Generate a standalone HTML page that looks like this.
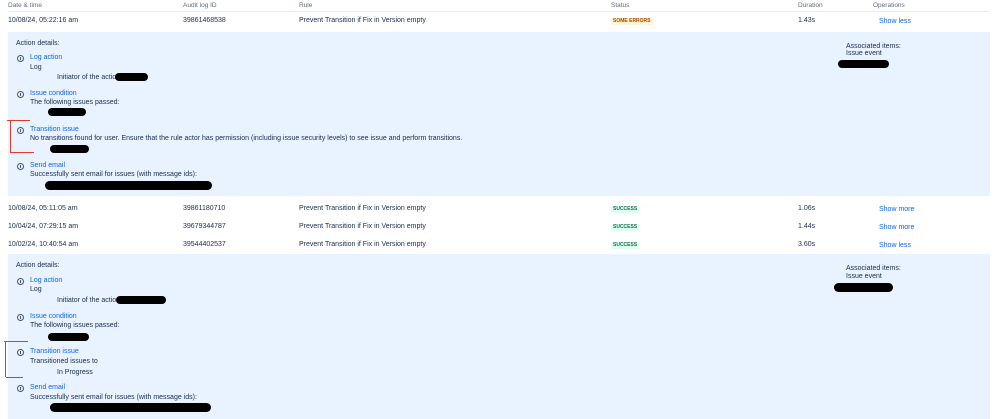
<!DOCTYPE html>
<html><head><meta charset="utf-8"><style>
body{margin:0;width:999px;height:419px;background:#fff;position:relative;overflow:hidden;font-family:"Liberation Sans",sans-serif;color:#172b4d}
.t{position:absolute;font-size:7px;line-height:8px;white-space:nowrap;margin-top:1px}
.h{color:#5e6c84;font-size:6.5px}
.l{color:#0c66e4}
.p{position:absolute;left:8px;width:982px;background:#e9f2ff}
.b{position:absolute;background:#000;border-radius:5px}
.i{position:absolute;width:5px;height:5px;border:1px solid #44546f;border-radius:50%}
.i:after{content:"";position:absolute;left:2px;top:1px;width:1px;height:3px;background:#44546f}
.r{position:absolute;background:#e5372c}
.bd{position:absolute;font-size:5px;font-weight:bold;line-height:7px;padding:0 2px;border-radius:2px;margin-top:1px}
</style></head><body>
<div class="t h" style="left:8px;top:1px">Date &amp; time</div>
<div class="t h" style="left:183px;top:1px">Audit log ID</div>
<div class="t h" style="left:299px;top:1px">Rule</div>
<div class="t h" style="left:611px;top:1px">Status</div>
<div class="t h" style="left:798px;top:1px">Duration</div>
<div class="t h" style="left:873px;top:1px">Operations</div>
<div style="position:absolute;left:8px;top:11px;width:982px;height:1px;background:#ebecf0"></div>

<div class="t" style="left:8px;top:16px">10/08/24, 05:22:16 am</div>
<div class="t" style="left:183px;top:16px">39861468538</div>
<div class="t" style="left:299px;top:16px">Prevent Transition if Fix in Version empty</div>
<div class="bd" style="left:611px;top:17px;background:#fff4d6;color:#a54800">SOME ERRORS</div>
<div class="t" style="left:798px;top:16px">1.43s</div>
<div class="t l" style="left:879px;top:17px">Show less</div>

<div class="p" style="top:32px;height:164px"></div>
<div class="t" style="left:16px;top:39px">Action details:</div>
<div class="i" style="left:17px;top:55px"></div><div class="t l" style="left:30px;top:53px">Log action</div>
<div class="t" style="left:30px;top:63px">Log</div>
<div class="t" style="left:57px;top:73px">Initiator of the action</div><div class="b" style="left:115px;top:73px;width:33px;height:8px"></div>
<div class="i" style="left:17px;top:91px"></div><div class="t l" style="left:30px;top:89px">Issue condition</div>
<div class="t" style="left:30px;top:98px">The following issues passed:</div><div class="b" style="left:48px;top:108px;width:38px;height:8px"></div>
<div class="r" style="left:7px;top:120px;width:23px;height:1px"></div><div class="r" style="left:10px;top:120px;width:1px;height:33px"></div><div class="r" style="left:11px;top:152px;width:23px;height:1px"></div>
<div class="i" style="left:17px;top:127px"></div><div class="t l" style="left:30px;top:125px">Transition issue</div>
<div class="t" style="left:30px;top:134px">No transitions found for user. Ensure that the rule actor has permission (including issue security levels) to see issue and perform transitions.</div>
<div class="b" style="left:50px;top:145px;width:39px;height:8px"></div>
<div class="i" style="left:17px;top:163px"></div><div class="t l" style="left:30px;top:161px">Send email</div>
<div class="t" style="left:30px;top:170px">Successfully sent email for issues (with message ids):</div>
<div class="b" style="left:45px;top:181px;width:167px;height:9px"></div>
<div class="t" style="left:846px;top:42px">Associated items:</div>
<div class="t" style="left:846px;top:49px">Issue event</div>
<div class="b" style="left:838px;top:60px;width:51px;height:8px"></div>

<div class="t" style="left:8px;top:204px">10/08/24, 05:11:05 am</div>
<div class="t" style="left:183px;top:204px">39861180710</div>
<div class="t" style="left:299px;top:204px">Prevent Transition if Fix in Version empty</div>
<div class="bd" style="left:611px;top:205px;background:#dcfff1;color:#216e4e">SUCCESS</div>
<div class="t" style="left:798px;top:204px">1.06s</div>
<div class="t l" style="left:879px;top:205px">Show more</div>

<div class="t" style="left:8px;top:222px">10/04/24, 07:29:15 am</div>
<div class="t" style="left:183px;top:222px">39679344787</div>
<div class="t" style="left:299px;top:222px">Prevent Transition if Fix in Version empty</div>
<div class="bd" style="left:611px;top:223px;background:#dcfff1;color:#216e4e">SUCCESS</div>
<div class="t" style="left:798px;top:222px">1.44s</div>
<div class="t l" style="left:879px;top:223px">Show more</div>

<div class="t" style="left:8px;top:240px">10/02/24, 10:40:54 am</div>
<div class="t" style="left:183px;top:240px">39544402537</div>
<div class="t" style="left:299px;top:240px">Prevent Transition if Fix in Version empty</div>
<div class="bd" style="left:611px;top:241px;background:#dcfff1;color:#216e4e">SUCCESS</div>
<div class="t" style="left:798px;top:240px">3.60s</div>
<div class="t l" style="left:879px;top:241px">Show less</div>

<div class="p" style="top:254px;height:165px"></div>
<div class="t" style="left:16px;top:261px">Action details:</div>
<div class="i" style="left:17px;top:278px"></div><div class="t l" style="left:30px;top:276px">Log action</div>
<div class="t" style="left:30px;top:285px">Log</div>
<div class="t" style="left:57px;top:296px">Initiator of the action</div><div class="b" style="left:116px;top:296px;width:50px;height:8px"></div>
<div class="i" style="left:17px;top:314px"></div><div class="t l" style="left:30px;top:312px">Issue condition</div>
<div class="t" style="left:30px;top:321px">The following issues passed:</div><div class="b" style="left:48px;top:333px;width:41px;height:8px"></div>
<div class="r" style="left:4px;top:341px;width:24px;height:1px"></div><div class="r" style="left:5px;top:341px;width:1px;height:36px"></div><div class="r" style="left:6px;top:377px;width:17px;height:1px"></div>
<div class="i" style="left:17px;top:349px"></div><div class="t l" style="left:30px;top:347px">Transition issue</div>
<div class="t" style="left:30px;top:357px">Transitioned issues to</div>
<div class="t" style="left:57px;top:368px">In Progress</div>
<div class="i" style="left:17px;top:385px"></div><div class="t l" style="left:30px;top:383px">Send email</div>
<div class="t" style="left:30px;top:393px">Successfully sent email for issues (with message ids):</div>
<div class="b" style="left:50px;top:403px;width:161px;height:9px"></div>
<div class="t" style="left:846px;top:264px">Associated items:</div>
<div class="t" style="left:846px;top:272px">Issue event</div>
<div class="b" style="left:834px;top:283px;width:59px;height:9px"></div>
</body></html>
